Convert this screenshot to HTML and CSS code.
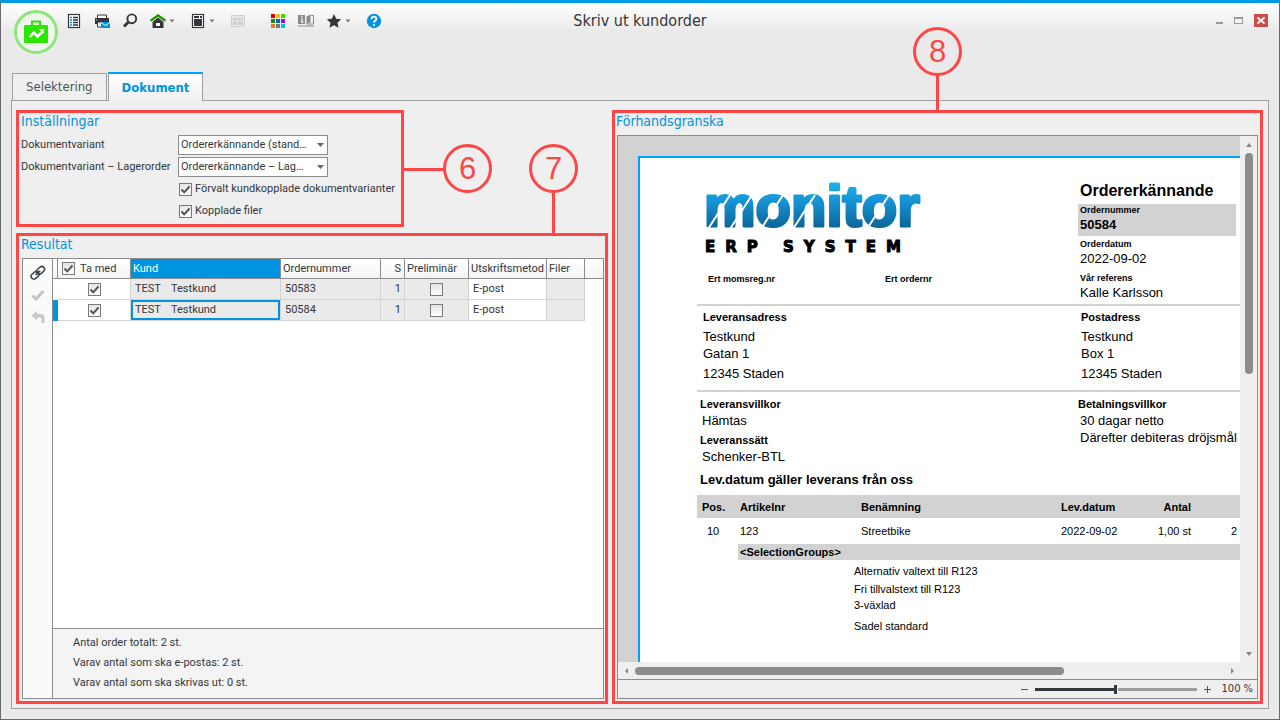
FILE: index.html
```html
<!DOCTYPE html>
<html lang="sv">
<head>
<meta charset="utf-8">
<meta name="viewport" content="width=device-width, initial-scale=1">
<title>Skriv ut kundorder</title>
<link rel="stylesheet" href="styles.css">
</head>
<body>
<div class="window">
  <header class="titlebar">
    <div class="titlebar-tools">
      <svg class="app-logo" viewBox="0 0 44 44" aria-hidden="true">
        <circle cx="22" cy="22" r="20.5" fill="#f0f3ee" stroke="#8ae878" stroke-width="3"/>
        <path d="M18 15v-3.500h8v3.500" fill="none" stroke="#2be600" stroke-width="2"/>
        <rect x="10" y="15" width="24" height="18" rx="1" fill="#2be600"/>
        <path d="M16 27l4-4.500 3.500 4L29 21" fill="none" stroke="#fff" stroke-width="2.600"/>
        <path d="M25 19h5v5z" fill="#fff"/>
      </svg>
      <nav class="toolbar" aria-label="Verktyg">
        <button class="tool" aria-label="Lista"><svg viewBox="0 0 16 16"><rect x="2.500" y="1.500" width="11" height="13" fill="#fff" stroke="#33373b" stroke-width="1.200"/><path d="M4 4.500h2M4 7h2M4 9.500h2M4 12h2" stroke="#0094e0" stroke-width="1.300"/><path d="M7 4.500h5M7 7h5M7 9.500h5M7 12h5" stroke="#33373b" stroke-width="1.300"/></svg></button>
        <button class="tool" aria-label="Skriv ut"><svg viewBox="0 0 16 16"><path d="M3.500 5V2h9v3" fill="#fff" stroke="#33373b"/><path d="M1 5h14v6H1z" fill="#33373b"/><path d="M3.500 9h6v5h-6z" fill="#fff" stroke="#33373b"/><path d="M2 7h1M5 11h3" stroke="#ccc"/><path d="M7 9h9v6H7z" fill="#0094e0"/><path d="M7 9.500l4.500 3 4.500-3" fill="none" stroke="#fff"/></svg></button>
        <button class="tool" aria-label="Sök"><svg viewBox="0 0 16 16"><circle cx="9.800" cy="5.800" r="4.400" fill="none" stroke="#33373b" stroke-width="1.900"/><path d="M6.500 9L2 13.500" stroke="#33373b" stroke-width="3"/></svg></button>
        <button class="tool tool-menu" aria-label="Hem"><svg viewBox="0 0 16 16"><path d="M8 4.500l5.500 4.500v6h-11V9z" fill="#33373b"/><path d="M6 10h4v3H6z" fill="#fff"/><path d="M.6 7.800L8 2.400l7.400 5.400" fill="none" stroke="#1f9400" stroke-width="2.400"/></svg><svg class="caret" viewBox="0 0 6 4"><path d="M.5.500h5L3 3.500z"/></svg></button>
        <button class="tool tool-menu" aria-label="Dokument"><svg viewBox="0 0 16 16"><rect x="2.500" y="1.500" width="11" height="13" fill="#fff" stroke="#33373b" stroke-width="1.200"/><path d="M4 3h5v2H4zM10 3h2v2h-2zM4 6h8v7H4z" fill="#33373b"/></svg><svg class="caret" viewBox="0 0 6 4"><path d="M.5.500h5L3 3.500z"/></svg></button>
        <button class="tool" aria-label="Formulär" disabled><svg viewBox="0 0 16 16"><path d="M1.500 2.500h13v11h-13z" fill="#e8e8e8" stroke="#cfcfcf"/><path d="M3 5h4v3H3zM3 9h4v3H3zM8 5h5v2H8zM8 8h5v4H8z" fill="#cfcfcf"/></svg></button>
        <button class="tool tool-group" aria-label="Moduler"><svg viewBox="0 0 16 16"><path d="M1 1h4v4H1z" fill="#e00000"/><path d="M6 1h4v4H6z" fill="#e8c800"/><path d="M11 1h4v4h-4z" fill="#33e000"/><path d="M1 6h4v4H1z" fill="#1f8a00"/><path d="M6 6h4v4H6z" fill="#0b5fd0"/><path d="M11 6h4v4h-4z" fill="#9a10f0"/><path d="M1 11h4v4H1z" fill="#f07818"/><path d="M6 11h4v4H6z" fill="#5f7d8c"/><path d="M11 11h4v4h-4z" fill="#00c8d0"/></svg></button>
        <button class="tool" aria-label="Handbok"><svg viewBox="0 0 16 16"><path d="M0 2h7v9H0z" fill="#8a8a8a"/><path d="M3 3.500h1.500M4 5v4M3 9h2.500" stroke="#eee" stroke-width="1.300"/><path d="M8.500 3.500l4-2v8l-4 1.500z" fill="#8a8a8a"/><path d="M13 2.500h2.500V11H9M0 13h16" fill="none" stroke="#8a8a8a"/></svg></button>
        <button class="tool tool-menu" aria-label="Favoriter"><svg viewBox="0 0 16 16"><path d="M8 1l2.200 4.700 5 .6-3.700 3.500 1 5L8 12.300l-4.500 2.500 1-5L.8 6.300l5-.6z" fill="#33373b"/></svg><svg class="caret" viewBox="0 0 6 4"><path d="M.5.500h5L3 3.500z"/></svg></button>
        <button class="tool" aria-label="Hjälp"><svg viewBox="0 0 16 16"><circle cx="8" cy="8" r="7.200" fill="#0094e0"/><path d="M5.500 6.200c0-3.400 5-3.200 5-.4C10.500 7.500 8 7.600 8 9.800" fill="none" stroke="#fff" stroke-width="1.800"/><circle cx="8" cy="12" r="1.100" fill="#fff"/></svg></button>
      </nav>
    </div>
    <h1 class="window-title">Skriv ut kundorder</h1>
    <div class="window-controls">
      <button class="control" aria-label="Minimera"><svg viewBox="0 0 14 14"><path d="M6 8h7v2H6z" fill="#999"/></svg></button>
      <button class="control" aria-label="Maximera"><svg viewBox="0 0 14 14"><path d="M2 3h9v7H2z" fill="#999"/><path d="M3 5h7v4H3z" fill="#f4f4f4"/></svg></button>
      <button class="control" aria-label="Stäng"><svg viewBox="0 0 14 14"><path d="M0 0h14v13H0z" fill="#cc4b4b"/><path d="M3.500 3.500l7 6M10.500 3.500l-7 6" stroke="#fff" stroke-width="1.700"/></svg></button>
    </div>
  </header>

  <div class="tabs" role="tablist">
    <button class="tab" role="tab" aria-selected="false">Selektering</button>
    <button class="tab tab-active" role="tab" aria-selected="true">Dokument</button>
  </div>

  <main class="panel">
    <div class="left-column">
      <section class="marked settings">
        <h2 class="heading">Inställningar</h2>
        <div class="settings-grid">
          <label for="variant">Dokumentvariant</label>
          <select id="variant" class="combo"><option>Ordererkännande (stand…</option></select>
          <label for="variant-stock">Dokumentvariant – Lagerorder</label>
          <select id="variant-stock" class="combo"><option>Ordererkännande – Lag…</option></select>
          <label class="option"><input type="checkbox" class="check" checked>Förvalt kundkopplade dokumentvarianter</label>
          <label class="option"><input type="checkbox" class="check" checked>Kopplade filer</label>
        </div>
        <div class="callout callout-side"><span class="callout-number">6</span></div>
      </section>

      <section class="marked result">
        <h2 class="heading">Resultat</h2>
        <div class="result-box">
          <div class="side-tools">
            <button class="side-tool" aria-label="Länka"><svg viewBox="0 0 16 16"><g fill="none" stroke="#3a3f45" stroke-width="1.500" transform="rotate(-42 8 8)"><rect x="0" y="5" width="8.500" height="5.500" rx="2.700"/><rect x="7.500" y="5" width="8.500" height="5.500" rx="2.700"/><path d="M5 7.800h6"/></g></svg></button>
            <button class="side-tool" aria-label="Markera" disabled><svg viewBox="0 0 16 16"><path d="M2.500 8.500l3.500 3.500 7.500-8" fill="none" stroke="#c4c4c4" stroke-width="3"/></svg></button>
            <button class="side-tool" aria-label="Ångra" disabled><svg viewBox="0 0 16 16"><path d="M1.500 6.500L7 2v3h3c3 0 4.500 1.500 4.500 4v5h-3v-3.500c0-1.500-.5-2-2-2H7v3z" fill="#c8c8c8"/></svg></button>
          </div>
          <div class="result-main">
            <table class="orders">
              <colgroup><col class="w-mark"><col class="w-include"><col class="w-customer"><col class="w-number"><col class="w-s"><col class="w-prel"><col class="w-method"><col class="w-files"><col></colgroup>
              <thead>
                <tr><th></th><th><label class="include-all"><input type="checkbox" class="check" checked>Ta med</label></th><th class="sorted">Kund</th><th>Ordernummer</th><th class="num">S</th><th>Preliminär</th><th>Utskriftsmetod</th><th>Filer</th><th class="last"></th></tr>
              </thead>
              <tbody>
                <tr><td class="mark"></td><td class="center"><input type="checkbox" class="check" aria-label="Ta med 50583" checked></td><td class="ro"><span class="customer"><span class="code">TEST</span><span>Testkund</span></span></td><td class="ro">50583</td><td class="ro num">1</td><td class="ro center"><input type="checkbox" class="check" aria-label="Preliminär 50583"></td><td>E-post</td><td class="ro"></td><td class="last"></td></tr>
                <tr><td class="mark mark-on"></td><td class="center"><input type="checkbox" class="check" aria-label="Ta med 50584" checked></td><td class="ro focused"><span class="customer"><span class="code">TEST</span><span>Testkund</span></span></td><td class="ro">50584</td><td class="ro num">1</td><td class="ro center"><input type="checkbox" class="check" aria-label="Preliminär 50584"></td><td>E-post</td><td class="ro"></td><td class="last"></td></tr>
              </tbody>
            </table>
            <div class="summary">
              <p>Antal order totalt: 2 st.</p>
              <p>Varav antal som ska e-postas: 2 st.</p>
              <p>Varav antal som ska skrivas ut: 0 st.</p>
            </div>
          </div>
        </div>
        <div class="callout callout-top callout-seven"><span class="callout-number">7</span></div>
      </section>
    </div>

    <section class="marked preview">
      <h2 class="heading">Förhandsgranska</h2>
      <div class="preview-box">
        <div class="viewport">
          <article class="sheet">
            <div class="sheet-head">
              <div class="sheet-brand">
                <svg class="brand" viewBox="0 0 220 78" role="img" aria-label="monitor ERP SYSTEM">
                  <defs><linearGradient id="blue" gradientUnits="userSpaceOnUse" x1="0" y1="0" x2="0" y2="48"><stop offset="0" stop-color="#22b4ee"/><stop offset=".45" stop-color="#1690d2"/><stop offset="1" stop-color="#0b6394"/></linearGradient></defs>
                  <text class="brand-name" x="-1" y="45">monitor</text>
                  <path d="M3 48L25 14M25 48L47 14M56 48L78 14M88 48L110 14M162 48L184 14" stroke="#fff" stroke-width="2"/>
                  <text class="brand-sub" x="0" y="71">ERP SYSTEM</text>
                </svg>
                <div class="refs"><span>Ert momsreg.nr</span><span>Ert ordernr</span></div>
              </div>
              <div class="sheet-info">
                <h3 class="sheet-title">Ordererkännande</h3>
                <dl class="facts">
                  <div class="fact shaded"><dt>Ordernummer</dt><dd><b>50584</b></dd></div>
                  <div class="fact"><dt>Orderdatum</dt><dd>2022-09-02</dd></div>
                  <div class="fact"><dt>Vår referens</dt><dd>Kalle Karlsson</dd></div>
                </dl>
              </div>
            </div>
            <div class="sheet-split addresses">
              <div><h4>Leveransadress</h4><p>Testkund</p><p>Gatan 1</p><p class="city">12345 Staden</p></div>
              <div><h4>Postadress</h4><p>Testkund</p><p>Box 1</p><p class="city">12345 Staden</p></div>
            </div>
            <div class="sheet-split terms">
              <div><h4>Leveransvillkor</h4><p>Hämtas</p><h4 class="second">Leveranssätt</h4><p>Schenker-BTL</p></div>
              <div><h4>Betalningsvillkor</h4><p>30 dagar netto</p><p>Därefter debiteras dröjsmål</p></div>
            </div>
            <h3 class="sheet-note">Lev.datum gäller leverans från oss</h3>
            <table class="lines">
              <colgroup><col class="l-pos"><col class="l-item"><col class="l-name"><col class="l-date"><col class="l-qty"><col></colgroup>
              <thead><tr><th class="pos">Pos.</th><th>Artikelnr</th><th>Benämning</th><th>Lev.datum</th><th class="qty">Antal</th><th></th></tr></thead>
              <tbody>
                <tr><td class="pos">10</td><td>123</td><td>Streetbike</td><td>2022-09-02</td><td class="qty">1,00 st</td><td class="price">2</td></tr>
                <tr class="group"><td class="blank"></td><th colspan="5">&lt;SelectionGroups&gt;</th></tr>
              </tbody>
            </table>
            <ul class="extras"><li>Alternativ valtext till R123</li><li class="gap-small">Fri tillvalstext till R123</li><li>3-växlad</li><li class="gap-large">Sadel standard</li></ul>
          </article>
        </div>
        <div class="scroll scroll-v">
          <button class="arrow" aria-label="Upp"><svg viewBox="0 0 6 4"><path d="M0 4h6L3 0z"/></svg></button>
          <div class="track"><div class="thumb"></div></div>
          <button class="arrow" aria-label="Ner"><svg viewBox="0 0 6 4"><path d="M0 0h6L3 4z"/></svg></button>
        </div>
        <div class="scroll scroll-h">
          <button class="arrow" aria-label="Vänster"><svg viewBox="0 0 6 6"><path d="M4 0v6L1 3z"/></svg></button>
          <div class="track"><div class="thumb"></div></div>
          <button class="arrow" aria-label="Höger"><svg viewBox="0 0 6 6"><path d="M2 0v6l3-3z"/></svg></button>
        </div>
        <div class="zoombar">
          <button class="zoom-step" aria-label="Zooma ut"><svg viewBox="0 0 9 9"><path d="M1 4.500h7"/></svg></button>
          <input class="zoom-range" type="range" min="0" max="200" value="100" aria-label="Zoom">
          <button class="zoom-step" aria-label="Zooma in"><svg viewBox="0 0 9 9"><path d="M1 4.500h7M4.500 1v7"/></svg></button>
          <output class="zoom-value">100 %</output>
        </div>
      </div>
      <div class="callout callout-top callout-eight"><span class="callout-number">8</span></div>
    </section>
  </main>
</div>
</body>
</html>
```

FILE: styles.css
```css
* { box-sizing: border-box; }

body {
  margin: 0;
  font-family: Roboto, "Noto Sans", sans-serif;
  font-size: 11px;
  line-height: 16px;
  color: #33373b;
}

h1, h2, h3, h4, p, dl, dd, ul { margin: 0; padding: 0; font-weight: normal; }
button { padding: 0; border: 0; background: none; font: inherit; color: inherit; }

.window {
  display: flex;
  flex-direction: column;
  min-height: 100vh;
  padding: 0 10px 10px;
  border: 1px solid #6b6b6b;
  border-top: 3px solid #009ae6;
  background: linear-gradient(#fff, #eaeaea 28px);
}

/* Title bar */
.titlebar { display: grid; grid-template-columns: 1fr auto 1fr; height: 69px; }
.titlebar-tools { display: flex; align-items: flex-start; gap: 2px; padding: 4px 0 0 3px; }
.app-logo { width: 44px; height: 44px; margin-top: 3px; }
.toolbar { display: flex; }
.tool { display: flex; align-items: center; width: 28px; height: 28px; padding-left: 6px; gap: 3px; }
.tool svg { width: 16px; height: 16px; flex: none; }
.tool-menu { width: 40px; }
.tool-group { margin-left: 12px; }
.tool .caret { width: 6px; height: 4px; fill: #777; }
.window-title, .tab, .heading { font-family: "DejaVu Sans Condensed", "Noto Sans", sans-serif; }
.window-title { font-size: 16px; line-height: 36px; }
.window-controls { display: flex; justify-content: flex-end; gap: 8px; padding: 11px 1px 0 0; }
.control { width: 14px; height: 14px; }
.control svg { display: block; width: 14px; height: 14px; }

/* Tabs */
.tabs { display: flex; align-items: flex-end; gap: 1px; padding-left: 1px; margin-bottom: -1px; position: relative; }
.tab {
  height: 27px;
  margin-bottom: 1px;
  padding: 0 13px;
  border: 1px solid #a0a0a0;
  border-bottom: 0;
  background: #efefef;
  font-size: 13px;
  color: #4a5560;
}
.tab-active {
  height: 29px;
  margin-bottom: 0;
  border-top: 2px solid #00a2ff;
  background: linear-gradient(#fff, #efefef);
  font-weight: bold;
  color: #0094e0;
}

.panel {
  display: flex;
  flex: 1;
  gap: 4px;
  padding: 9px 5px 4px 4px;
  border: 1px solid #a0a0a0;
  background: #efefef;
}
.left-column { display: flex; flex-direction: column; gap: 6px; width: 592px; }
.marked { position: relative; border: 3px solid #ff4646; }
.heading { font-size: 14px; line-height: 16px; color: #0094e0; }

/* Settings */
.settings { width: 388px; padding: 0 2px 2px; }
.settings-grid { display: grid; grid-template-columns: 157px 1fr; grid-auto-rows: 22px; align-items: center; margin-top: 5px; }
.option { grid-column: 2; display: flex; align-items: center; gap: 3px; padding-left: 1px; white-space: nowrap; }
.combo {
  width: 150px;
  height: 20px;
  padding: 0 14px 0 2px;
  border: 1px solid #8c8c8c;
  border-radius: 0;
  appearance: none;
  background: #fff url("data:image/svg+xml,%3Csvg xmlns='http://www.w3.org/2000/svg' width='7' height='4'%3E%3Cpath d='M0 0h7L3.500 4z' fill='%23666'/%3E%3C/svg%3E") no-repeat right 3px center;
  font: inherit;
  color: inherit;
}
.check {
  flex: none;
  width: 13px;
  height: 13px;
  margin: 0;
  border: 1px solid #7a7a7a;
  appearance: none;
  background: linear-gradient(#e4e4e4, #fff);
  vertical-align: middle;
}
.check:checked {
  background: url("data:image/svg+xml,%3Csvg xmlns='http://www.w3.org/2000/svg' width='11' height='11'%3E%3Cpath d='M1.500 5.500l2.700 2.800L9.500 2.500' fill='none' stroke='%23555' stroke-width='2'/%3E%3C/svg%3E") no-repeat, linear-gradient(#e4e4e4, #fff);
}

/* Result list */
.result { display: flex; flex: 1; flex-direction: column; }
.result > .heading { padding-left: 2px; margin-bottom: 6px; }
.result-box { display: flex; flex: 1; margin: 0 1px 2px 3px; border: 1px solid #8c8c8c; background: #fff; }
.side-tools { display: flex; flex-direction: column; align-items: center; gap: 6px; width: 30px; padding-top: 6px; border-right: 1px solid #8c8c8c; background: #fafafa; }
.side-tool { width: 16px; height: 16px; }
.side-tool svg { display: block; width: 16px; height: 16px; }
.result-main { display: flex; flex: 1; flex-direction: column; }
.orders { width: 100%; table-layout: fixed; border-collapse: separate; border-spacing: 0; }
.w-mark { width: 5px; } .w-include { width: 73px; } .w-customer { width: 150px; } .w-number { width: 100px; }
.w-s { width: 24px; } .w-prel { width: 64px; } .w-method { width: 78px; } .w-files { width: 38px; }
.orders th {
  height: 20px;
  padding: 0 2px;
  border: solid #8c8c8c;
  border-width: 0 1px 1px 0;
  background: linear-gradient(#fff, #f4f4f4);
  font-weight: normal;
  text-align: left;
  white-space: nowrap;
}
.orders td { height: 21px; padding: 0 4px; border: solid #d2d2d2; border-width: 0 1px 1px 0; white-space: nowrap; }
.orders .sorted { background: #0094e0; color: #fff; }
.orders .last { border-right: 0; }
.orders td.last { border-bottom: 0; }
.orders .num { padding-right: 3px; text-align: right; }
.orders .center { text-align: center; line-height: 18px; }
.orders .ro { background: #eaeaea; }
.orders .mark { padding: 0; border-color: #fff; }
.orders .mark-on { border-color: #0094e0; background: #0094e0; }
.orders .focused { box-shadow: inset 0 0 0 2px #0094e0; }
.include-all { display: flex; align-items: center; gap: 5px; padding-left: 2px; }
.customer { display: flex; }
.code { width: 36px; }
.summary { margin-top: auto; padding: 4px 20px 5px; border-top: 1px solid #8c8c8c; background: #f4f4f4; line-height: 20px; }

/* Preview */
.preview { display: flex; flex: 1; flex-direction: column; min-width: 0; }
.preview > .heading { padding-left: 1px; margin-bottom: 6px; }
.preview-box {
  display: grid;
  flex: 1;
  grid-template: minmax(0, 1fr) 17px 19px / minmax(0, 1fr) 17px;
  margin: 0 2px 2px;
  border: 1px solid #8c8c8c;
}
.viewport { overflow: hidden; padding: 20px 0 0 20px; background: #d2d2d2; }
.sheet {
  height: 100%;
  padding: 23px 0 0 57px;
  border: solid #00a2ff;
  border-width: 2px 0 0 2px;
  background: #fff;
  font-family: "Liberation Sans", Arial, sans-serif;
  font-size: 13px;
  color: #000;
}
.sheet-head { display: flex; border-bottom: 2px solid #d2d2d2; }
.sheet-brand { display: flex; flex-direction: column; justify-content: space-between; width: 381px; padding: 0 0 17px 8px; }
.brand { width: 220px; height: 78px; overflow: visible; }
.brand-name { font: bold 58px "Liberation Sans", Arial, sans-serif; fill: url(#blue); stroke: url(#blue); stroke-width: 3px; stroke-linejoin: round; }
.brand-sub { font: bold 15px "DejaVu Sans", sans-serif; letter-spacing: 10px; fill: #000; stroke: #000; stroke-width: 1px; }
.refs { display: flex; padding-left: 3px; font-size: 9px; font-weight: bold; line-height: 16px; }
.refs span { width: 177px; }
.sheet-info { flex: 1; min-width: 0; }
.sheet-title { padding-left: 2px; margin-bottom: 3px; font-size: 16px; font-weight: bold; line-height: 20px; }
.facts { display: grid; grid-template-columns: 158px; gap: 2px; }
.fact { padding: 1px 2px 2px; white-space: nowrap; }
.fact dt { font-size: 9px; font-weight: bold; line-height: 11px; }
.fact dd { line-height: 18px; }
.shaded { background: #d2d2d2; }
.sheet-split { display: grid; grid-template-columns: 378px 1fr; }
.sheet-split h4 { font-size: 11px; font-weight: bold; line-height: 15px; }
.sheet-split p { line-height: 17px; white-space: nowrap; }
.addresses { padding: 4px 0 8px 6px; border-bottom: 2px solid #d2d2d2; }
.addresses h4 { margin-bottom: 3px; }
.addresses .city { margin-top: 3px; }
.terms { padding: 5px 0 5px 3px; }
.terms p { padding-left: 2px; }
.terms .second { margin-top: 4px; }
.sheet-note { padding-left: 3px; margin-bottom: 5px; font-size: 13px; font-weight: bold; line-height: 20px; }
.lines { width: 100%; table-layout: fixed; border-collapse: collapse; font-size: 11px; line-height: 16px; }
.l-pos { width: 41px; } .l-item { width: 121px; } .l-name { width: 200px; } .l-date { width: 90px; } .l-qty { width: 44px; }
.lines th, .lines td { padding: 0 2px; text-align: left; white-space: nowrap; }
.lines thead th { height: 23px; background: #d2d2d2; }
.lines td { height: 26px; }
.lines th.pos, .lines td.pos { padding: 0 10px; }
.lines th.pos { padding: 0 5px; }
.lines th.qty, .lines td.qty { text-align: right; }
.lines .price { padding-left: 38px; }
.lines .group th { height: 16px; background: #d2d2d2; }
.lines .group .blank { height: 16px; padding: 0; }
.extras { padding: 3px 0 0 157px; list-style: none; font-size: 11px; line-height: 16px; }
.gap-small { margin-top: 2px; }
.gap-large { margin-top: 5px; }

.scroll { display: flex; align-items: center; background: #efefef; }
.scroll-v { flex-direction: column; }
.scroll-h { grid-column: 1 / 2; }
.arrow { display: flex; align-items: center; justify-content: center; width: 17px; height: 17px; flex: none; }
.arrow svg { width: 6px; height: 6px; fill: #888; }
.track { flex: 1; }
.scroll-v .track { width: 8px; }
.scroll-h .track { height: 8px; }
.thumb { border-radius: 4px; background: #8c8c8c; }
.scroll-v .thumb { height: 45%; }
.scroll-h .thumb { width: 73%; height: 100%; }
.zoombar { display: flex; grid-column: 1 / 3; align-items: center; justify-content: flex-end; gap: 6px; padding-right: 4px; border-top: 1px solid #8c8c8c; }
.zoom-step { width: 9px; height: 9px; }
.zoom-step svg { display: block; width: 9px; height: 9px; stroke: #555; }
.zoom-range { width: 162px; height: 11px; margin: 0; appearance: none; background: linear-gradient(90deg, #33373b 50%, #9c9c9c 50%) no-repeat center / 100% 3px; }
.zoom-range::-webkit-slider-thumb { appearance: none; width: 4px; height: 9px; border-right: 1px solid #efefef; background: #33373b; }
.zoom-value { padding-left: 4px; font-family: "DejaVu Sans Condensed", sans-serif; font-size: 11px; }

/* Numbered callouts over the window */
.callout {
  position: absolute;
  z-index: 2;
  width: 49px;
  height: 49px;
  border: 3px solid #ff4646;
  border-radius: 50%;
  font: 31px/44px "Liberation Sans", Arial, sans-serif;
  text-align: center;
  color: #ff4646;
}
.callout::after { content: ""; position: absolute; background: #ff4646; }
.callout-side { left: 424px; top: 31px; }
.callout-side::after { right: 100%; top: 21px; width: 42px; height: 3px; }
.callout-top::after { top: 100%; left: 20px; width: 3px; height: 43px; }
.callout-seven { left: 510px; bottom: calc(100% + 43px); }
.callout-eight { left: 298px; bottom: calc(100% + 37px); }
.callout-eight::after { height: 37px; }
```
